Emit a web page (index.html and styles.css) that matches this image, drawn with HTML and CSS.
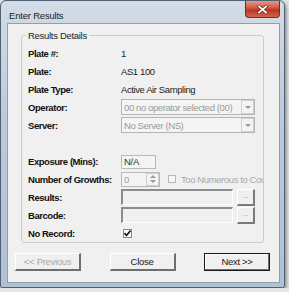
FILE: index.html
```html
<!DOCTYPE html>
<html lang="en">
<head>
    <meta charset="UTF-8">
    <title>Enter Results</title>
    <link rel="stylesheet" href="styles.css">
</head>
<body>
    <div class="window">
        <div class="titlebar">
            <span class="title">Enter Results</span>
            <div class="close-btn">
                <svg width="11" height="9" viewBox="0 0 11 9">
                    <path d="M2 1.5 L9 7.5 M9 1.5 L2 7.5" stroke="#6b1d12" stroke-width="3" stroke-linecap="square"/>
                    <path d="M2 1.5 L9 7.5 M9 1.5 L2 7.5" stroke="#fff" stroke-width="1.8" stroke-linecap="square"/>
                </svg>
            </div>
        </div>

        <div class="client">
            <!-- Results details group -->
            <fieldset class="group">
                <legend>Results Details</legend>
                <div class="rows">
                    <span class="lbl">Plate #:</span>
                    <span class="val">1</span>

                    <span class="lbl">Plate:</span>
                    <span class="val">AS1 100</span>

                    <span class="lbl">Plate Type:</span>
                    <span class="val">Active Air Sampling</span>

                    <span class="lbl">Operator:</span>
                    <div class="combo">
                        <span>00 no operator selected (00)</span>
                        <span class="drop"><i></i></span>
                    </div>

                    <span class="lbl">Server:</span>
                    <div class="combo">
                        <span>No Server (NS)</span>
                        <span class="drop"><i></i></span>
                    </div>

                    <div class="spacer"></div>

                    <span class="lbl">Exposure (Mins):</span>
                    <div class="field">
                        <div class="textbox">N/A</div>
                    </div>

                    <span class="lbl">Number of Growths:</span>
                    <div class="field growths">
                        <div class="spin">
                            <span class="spin-val">0</span>
                            <span class="spin-btns"><i class="up"></i><i class="down"></i></span>
                        </div>
                        <span class="check small"></span>
                        <span class="check-text">Too Numerous to Count</span>
                    </div>

                    <span class="lbl">Results:</span>
                    <div class="field">
                        <div class="sunken"></div>
                        <div class="dots">...</div>
                    </div>

                    <span class="lbl">Barcode:</span>
                    <div class="field">
                        <div class="sunken"></div>
                        <div class="dots">...</div>
                    </div>

                    <span class="lbl">No Record:</span>
                    <div class="field">
                        <span class="check checked">
                            <svg width="7" height="7" viewBox="0 0 7 7">
                                <path d="M0.5 3 L2.5 5.5 L6.5 0.5" stroke="#111" stroke-width="1.6" fill="none"/>
                            </svg>
                        </span>
                    </div>
                </div>
            </fieldset>

            <div class="buttons">
                <div class="btn disabled">&lt;&lt; Previous</div>
                <div class="btn">Close</div>
                <div class="btn default">Next &gt;&gt;</div>
            </div>
        </div>
    </div>
</body>
</html>
```

FILE: styles.css
```css
* {
    margin: 0;
    padding: 0;
    box-sizing: border-box;
}

body {
    background: #e6e6e6;
    font-family: "Liberation Sans", Arial, sans-serif;
    font-size: 9.5px;
    color: #1a1a1a;
}

.window {
    width: 285px;
    height: 288px;
    border: 1px solid #4f6275;
    border-radius: 6px 6px 2px 2px;
    background: linear-gradient(#d3dce6, #bccbda 40%, #b0c1d3);
    padding: 0 4px 4px 6px;
    display: flex;
    flex-direction: column;
    box-shadow: 1px 2px 4px rgba(0, 0, 0, 0.5);
}

.titlebar {
    height: 22px;
    display: flex;
    align-items: flex-start;
    padding-left: 2px;
}

.title {
    margin-top: 9px;
    font-size: 9.5px;
    line-height: 11px;
    color: #1e1e1e;
    letter-spacing: -0.2px;
}

.close-btn {
    margin-left: auto;
    width: 35px;
    height: 17px;
    border: 1px solid #7a2a1e;
    border-top: none;
    border-radius: 0 0 4px 4px;
    background: linear-gradient(#e59a86, #d0563d 45%, #bb3420 55%, #d4634b);
    display: flex;
    align-items: center;
    justify-content: center;
}

.client {
    flex: 1;
    background: #f0f0f0;
    border: 1px solid #8e9fb1;
    display: flex;
    flex-direction: column;
}

.group {
    margin: 6px 0 0 13px;
    width: 243px;
    border: 1px solid #c9ced3;
    border-radius: 3px;
    padding: 3px 0 0 6px;
}

.group legend {
    font-size: 9.5px;
    line-height: 11px;
    padding: 0 2px;
    margin-left: -2px;
    color: #222;
    letter-spacing: -0.3px;
}

.rows {
    display: grid;
    grid-template-columns: 93px 142px;
    grid-auto-rows: 18px;
    align-items: center;
}

.lbl {
    font-weight: bold;
    font-size: 9.5px;
    color: #111;
    letter-spacing: -0.45px;
}

.val {
    letter-spacing: -0.4px;
    color: #222;
}

.spacer {
    grid-column: 1 / 3;
}

.combo {
    width: 134px;
    height: 16px;
    border: 1px solid #b4b4b4;
    background: #f4f4f4;
    display: flex;
    align-items: center;
    padding-left: 2px;
    color: #9a9a9a;
    letter-spacing: -0.4px;
}

.combo .drop {
    margin-left: auto;
    width: 13px;
    height: 14px;
    border: 1px solid #cfcfcf;
    display: flex;
    align-items: center;
    justify-content: center;
}

.combo .drop i,
.spin-btns i {
    width: 0;
    height: 0;
    border-left: 3px solid transparent;
    border-right: 3px solid transparent;
    border-top: 3px solid #9a9a9a;
}

.field {
    display: flex;
    align-items: center;
}

.textbox {
    width: 35px;
    height: 14px;
    margin-top: 2px;
    border: 1px solid #b9b9b9;
    background: #f4f4f4;
    padding-left: 2px;
    line-height: 12px;
    color: #333;
    letter-spacing: -0.3px;
}

.growths {
    white-space: nowrap;
    overflow: hidden;
}

.spin {
    width: 39px;
    height: 15px;
    border: 1px solid #b9b9b9;
    background: #f4f4f4;
    display: flex;
    align-items: center;
    padding-left: 2px;
    color: #a0a0a0;
    flex-shrink: 0;
}

.spin-btns {
    margin-left: auto;
    width: 13px;
    height: 13px;
    border: 1px solid #cfcfcf;
    display: flex;
    flex-direction: column;
    align-items: center;
    justify-content: space-around;
}

.spin-btns i.up {
    border-top: none;
    border-bottom: 3px solid #9a9a9a;
}

.check {
    width: 9px;
    height: 9px;
    border: 1px solid #9a9a9a;
    background: #f7f7f7;
    flex-shrink: 0;
    display: flex;
    align-items: center;
    justify-content: center;
}

.check.small {
    width: 8px;
    height: 8px;
    margin-left: 8px;
    border-color: #b8b8b8;
}

.check.checked {
    margin-left: 2px;
    border-color: #8a8a8a;
    background: #fff;
}

.check-text {
    margin-left: 5px;
    color: #a8a8a8;
    letter-spacing: -0.4px;
}

.sunken {
    width: 112px;
    height: 16px;
    border-top: 2px solid #8d8d8d;
    border-left: 2px solid #8d8d8d;
    border-right: 1px solid #fff;
    border-bottom: 1px solid #fff;
    background: #f0f0f0;
}

.dots {
    margin-left: 4px;
    width: 18px;
    height: 17px;
    border-top: 1px solid #fff;
    border-left: 1px solid #fff;
    border-right: 2px solid #7a7a7a;
    border-bottom: 2px solid #7a7a7a;
    background: #f0f0f0;
    color: #9a9a9a;
    font-size: 8px;
    text-align: center;
    line-height: 12px;
}

.buttons {
    margin-top: 10px;
    padding: 0 9px 0 7px;
    display: flex;
    justify-content: space-between;
}

.btn {
    width: 66px;
    height: 18px;
    border-top: 1px solid #fff;
    border-left: 1px solid #fff;
    border-right: 2px solid #6e6e6e;
    border-bottom: 2px solid #6e6e6e;
    background: #f0f0f0;
    text-align: center;
    line-height: 15px;
    color: #1a1a1a;
    letter-spacing: -0.3px;
}

.btn.disabled {
    color: #a9a9a9;
}

.btn.default {
    border: 1px solid #1a1a1a;
    box-shadow: inset -1px -1px 0 #6e6e6e, inset 1px 1px 0 #fff;
}
```
